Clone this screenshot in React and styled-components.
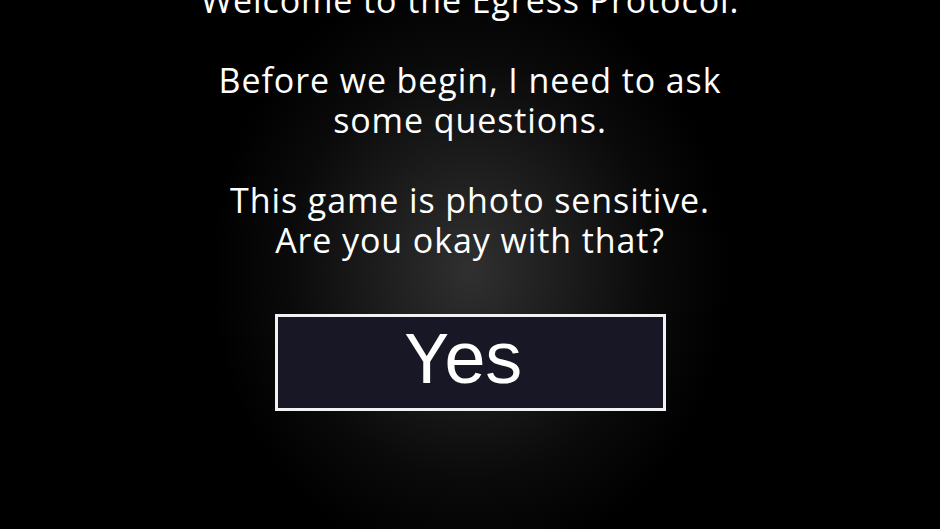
import React from "react";
import styled, { createGlobalStyle } from "styled-components";

const Global = createGlobalStyle`
  html, body { margin: 0; padding: 0; background: #000; }
  body { overflow: hidden; }
`;

const Screen = styled.div`
  width: 940px;
  height: 529px;
  overflow: hidden;
  display: flex;
  flex-direction: column;
  align-items: center;
  background:
    radial-gradient(ellipse 260px 300px at 50% 51%, #303030 0%, #1d1d1d 35%, #0a0a0a 70%, #000 100%);
  font-family: "Open Sans", "Liberation Sans", sans-serif;
  color: #fff;
`;

const Dialogue = styled.div`
  margin-top: -20px;
  display: flex;
  flex-direction: column;
  align-items: center;
  gap: 40px;
`;

const Paragraph = styled.p`
  margin: 0;
  font-size: 34px;
  font-weight: 500;
  line-height: 40px;
  text-align: center;
  letter-spacing: 0.9px;
  white-space: nowrap;
`;

const YesButton = styled.button`
  margin-top: 54px;
  width: 391px;
  height: 97px;
  box-sizing: border-box;
  border: 3px solid #f2f2f2;
  background: #181726;
  color: #fff;
  display: flex;
  align-items: center;
  justify-content: center;
  padding: 0 16px 0 0;
  cursor: pointer;
  font-family: "Liberation Mono", "DejaVu Sans Mono", monospace;
  font-size: 74px;
  font-weight: 400;
  letter-spacing: -6px;
  line-height: 1;
`;

export default function App() {
  return (
    <>
      <Global />
      <Screen>
        <Dialogue>
          <Paragraph>Welcome to the Egress Protocol.</Paragraph>
          <Paragraph>
            Before we begin, I need to ask
            <br />
            some questions.
          </Paragraph>
          <Paragraph>
            This game is photo sensitive.
            <br />
            Are you okay with that?
          </Paragraph>
        </Dialogue>
        <YesButton>Yes</YesButton>
      </Screen>
    </>
  );
}
